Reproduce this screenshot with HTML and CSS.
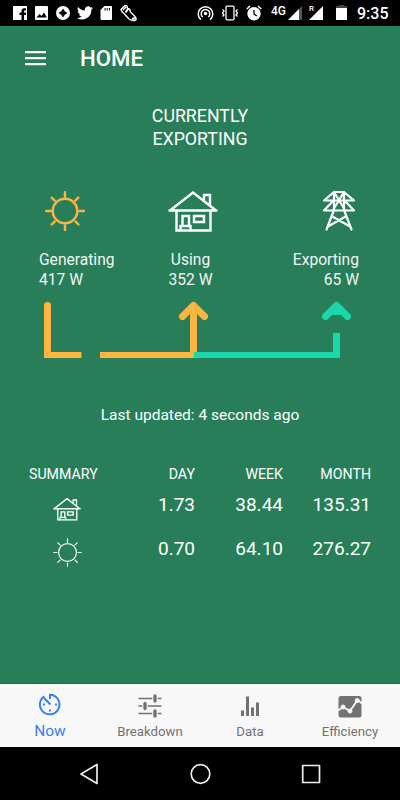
FILE: index.html
```
<!DOCTYPE html>
<html lang="en">
<head>
    <meta charset="UTF-8">
    <title>Home</title>
    <link rel="stylesheet" href="styles.css">
</head>
<body>
<svg class="defs">
    <symbol id="house" viewBox="0 0 50 42">
        <path d="M2 20.500 25 2.500 48 20.500M1.500 20.500h47M8.500 20.500V40.500h34V20.500M36 10V5h6v10"/>
        <path d="M14.500 36V26h6.500v10M12.500 40v-4h10v4M26 26h10v6h-10z"/>
    </symbol>
    <symbol id="sun" viewBox="0 0 40 40">
        <circle cx="20" cy="20" r="12.300"/>
        <path d="M20 1.200v4.500M20 34.500v4.500M1 20h4.700M34.500 20h4.500M6.700 6.700l3 3M30.500 30.500l3 3M33.300 6.700l-3 3M9.700 30.500l-3 3"/>
    </symbol>
</svg>
<div class="status">
    <div class="notices">
        <svg width="15" height="16" viewBox="0 0 15 16"><path fill="#fff" d="M0 1h14v14h-3V10h2V7.500h-2V6.200q0-.7.800-.7H13V3.200h-2Q8.500 3.200 8.500 5.700v1.800H6.500V10h2v5H0z"/></svg>
        <svg width="14" height="16" viewBox="0 0 14 16"><rect y="1" width="13" height="14" rx="1" fill="#fff"/><path d="M1.500 12.500 4.500 9 6.500 11 9 7.500 11.800 12.500z"/></svg>
        <svg width="14" height="16" viewBox="0 0 14 16"><circle cx="7" cy="8" r="7" fill="#fff"/><path d="M7 3.500 8.800 6.200 11.500 8 8.800 9.800 7 12.500 5.200 9.800 2.500 8 5.200 6.200z"/></svg>
        <svg width="16" height="16" viewBox="0 0 24 20"><path fill="#fff" d="M24 2.400c-.9.400-1.800.7-2.800.8a5 5 0 0 0 2.100-2.700 10 10 0 0 1-3.100 1.200 4.900 4.900 0 0 0-8.400 4.500A14 14 0 0 1 1.700 1 4.900 4.900 0 0 0 3.200 7.600 4.900 4.900 0 0 1 1 7a4.900 4.900 0 0 0 3.900 4.900 5 5 0 0 1-2.200.1 4.900 4.900 0 0 0 4.600 3.400A9.900 9.900 0 0 1 0 17.400 14 14 0 0 0 21.500 5q1.500-1.100 2.500-2.600z"/></svg>
        <svg width="13" height="16" viewBox="0 0 13 16"><path fill="#fff" d="M4.500 1H11q1 0 1 1v12q0 1-1 1H1.500q-1 0-1-1V5z"/><path stroke="#000" stroke-width="1" d="M5 3v2.500M7.200 3v2.500M9.400 3v2.500"/></svg>
        <svg width="18" height="18" viewBox="0 0 18 18" fill="none" stroke="#fff" stroke-width="1.400"><path d="M5 1.500 1 5.500Q1.500 8 4 9.500L9 15q3.500 2.500 6.800 1 1-2-1.300-4L10.500 8Q10 4.500 7.500 4.500L7 2zM3 6l3-3"/><path d="M8 5 5.500 8.500M12 14.500q2 .5 3-1" stroke-width="2"/></svg>
    </div>
    <div class="system">
        <svg width="17" height="16" viewBox="0 0 17 16" fill="none" stroke="#fff" stroke-width="1.500"><circle cx="8.500" cy="8.500" r="1.800" fill="#fff" stroke="none"/><path d="M4 14.700a7.300 7.300 0 1 1 9 0M5.700 12a4.300 4.300 0 1 1 5.600 0"/></svg>
        <svg width="18" height="16" viewBox="0 0 18 16" fill="none" stroke="#fff" stroke-width="1.300"><rect x="5" y="1.200" width="8" height="13.600" rx="1"/><path d="M1.500 4.500 3 6 1.500 8 3 10 1.500 11.500M16.500 4.500 15 6l1.500 2-1.500 2 1.500 1.500"/></svg>
        <svg width="16" height="16" viewBox="0 0 16 16"><circle cx="8" cy="8.800" r="6.700" fill="#fff"/><path d="M.8 4 4 1M15.200 4 12 1" stroke="#fff" stroke-width="1.500"/><path d="M8 5v4.200l2.800 1.700" fill="none" stroke="#000" stroke-width="1.300"/></svg>
        <span class="network">4G</span>
        <svg class="signal" width="14" height="16" viewBox="0 0 14 16"><path fill="#555" d="M14 1v14H0z"/><path fill="#fff" d="M11 4v11H0z"/></svg>
        <div class="roaming"><span>R</span><svg width="14" height="16" viewBox="0 0 14 16"><path fill="#fff" d="M14 1v14H0z"/></svg></div>
        <svg class="battery" width="11" height="16" viewBox="0 0 11 16"><path fill="#444" d="M3 0h5v1h3v3H0V1h3z"/><path fill="#fff" d="M0 3h11v12H0z"/></svg>
        <span class="clock">9:35</span>
    </div>
</div>
<main>
    <header>
        <div class="menu"><i></i><i></i><i></i></div>
        <h1>HOME</h1>
    </header>
    <h2>CURRENTLY<br>EXPORTING</h2>
    <div class="power">
        <div class="source generating">
            <svg class="icon-sun" width="40" height="40"><use href="#sun"/></svg>
            <p>Generating<br>417 W</p>
        </div>
        <div class="source using">
            <svg class="icon-house" width="50" height="42"><use href="#house"/></svg>
            <p>Using<br>352 W</p>
        </div>
        <div class="source exporting">
            <svg class="icon-pylon" width="34" height="42" viewBox="0 0 34 42">
                <path d="M12 2h10M12 2 2 10.500h30L22 2M12 2v8M22 2v8M11 11 2 20.500h30L23 11M12 2l11 18M22 2 11 20M12 11v9L4.500 39.500M22 11v9l7.500 19.500M9.500 26 28 36.500M24.500 26 6 36.500"/>
            </svg>
            <p>Exporting<br>65 W</p>
        </div>
    </div>
    <svg class="flow" width="400" height="60" viewBox="0 0 400 60">
        <g class="orange">
            <path d="M47.500 6v52" stroke-linecap="butt"/>
            <path d="M47.500 5.500v10"/>
            <path class="line" d="M44 55h37.500M100 55h97"/>
            <path d="M193.500 6v48" stroke-linecap="butt"/>
            <path d="M182.500 16.500 193.500 5.500l11 11"/>
        </g>
        <g class="teal">
            <path class="line" d="M194 55h146"/>
            <path stroke-linecap="butt" d="M336.500 33v25"/>
            <path d="M325.500 16.500l11-11 11 11"/>
            <path class="tip" d="M330 15l6.500-8 6.500 8z"/>
        </g>
    </svg>
    <p class="updated">Last updated: 4 seconds ago</p>
    <div class="summary">
        <span class="label">SUMMARY</span><span class="label">DAY</span><span class="label">WEEK</span><span class="label">MONTH</span>
        <svg class="row-house" width="28" height="24"><use href="#house"/></svg><b>1.73</b><b>38.44</b><b>135.31</b>
        <svg class="row-sun" width="29" height="29"><use href="#sun"/></svg><b>0.70</b><b>64.10</b><b>276.27</b>
    </div>
</main>
<nav class="tabs">
    <div class="tab active">
        <svg width="24" height="24" viewBox="0 0 24 24"><path fill="none" stroke="currentColor" stroke-width="2" d="M12.500 12.500 6 6M6.300 4.300A9.800 9.800 0 1 0 12 2.700V7"/><path fill="currentColor" d="M5 11.500h2v2H5zM17 11.500h2v2h-2zM11 17.500h2v2h-2z"/></svg>
        <span>Now</span>
    </div>
    <div class="tab">
        <svg width="24" height="24" viewBox="0 0 24 24" fill="none" stroke="currentColor"><path stroke-width="1.500" d="M.5 4.500h23M.5 12h23M.5 19.500h23"/><path stroke="#f8f8f8" stroke-width="5.500" d="M17 3v3M7 10.500v3M17 18v3"/><path stroke-width="3.300" stroke-linecap="round" d="M17 2v5M7 9.500v5M17 17v5"/></svg>
        <span>Breakdown</span>
    </div>
    <div class="tab">
        <svg width="24" height="24" viewBox="0 0 24 24" fill="currentColor"><path d="M3 16.500h3V22H3zM8 2.500h3V22H8zM13 13.500h3V22h-3zM18 8.500h3V22h-3z"/></svg>
        <span>Data</span>
    </div>
    <div class="tab">
        <svg width="24" height="24" viewBox="0 0 24 24"><rect x=".5" y="2" width="23" height="21.500" rx="2.500" fill="currentColor"/><g fill="#f8f8f8" stroke="#f8f8f8"><path fill="none" stroke-width="1.800" d="M0 16.500 5 13l7 4 7.500-11L24 9.500"/><circle cx="5" cy="13" r="2"/><circle cx="12" cy="17" r="2"/><circle cx="19.200" cy="6.500" r="2"/></g></svg>
        <span>Efficiency</span>
    </div>
</nav>
<div class="buttons">
    <svg width="22" height="24" viewBox="0 0 22 24"><path d="M18 2.500v19L2 12z"/></svg>
    <svg width="22" height="24" viewBox="0 0 22 24"><circle cx="10.500" cy="12" r="9.300"/></svg>
    <svg width="22" height="24" viewBox="0 0 22 24"><rect x="2.700" y="3.500" width="16.800" height="17"/></svg>
</div>
</body>
</html>
```
FILE: styles.css
```
* {
    box-sizing: border-box;
}
body {
    margin: 0;
    width: 400px;
    height: 800px;
    display: flex;
    flex-direction: column;
    overflow: hidden;
    font-family: Roboto, sans-serif;
    background: #000;
    color: #fff;
}
svg {
    display: block;
    flex-shrink: 0;
}
h1, h2, p {
    margin: 0;
}
.defs {
    width: 0;
    height: 0;
}
.status {
    height: 26px;
    padding: 0 11px 0 13px;
    display: flex;
    justify-content: space-between;
    align-items: center;
}
.notices, .system {
    display: flex;
    align-items: center;
    gap: 7px;
}
.system {
    margin-right: 1px;
}
.network {
    width: 17px;
    margin-left: 2px;
    font-size: 12px;
    font-weight: 500;
    line-height: 12px;
    padding-bottom: 5px;
}
.signal {
    margin-left: -7px;
}
.roaming {
    position: relative;
}
.roaming span {
    position: absolute;
    left: 0;
    top: 0;
    font-size: 8px;
    line-height: 8px;
    font-weight: 500;
}
.battery {
    margin-left: 6px;
}
.clock {
    width: 31px;
    margin-left: 3px;
    font-size: 16px;
    font-weight: 500;
    line-height: 20px;
    padding-top: 2px;
}
main {
    height: 658px;
    background: #287e59;
    border-bottom: 1px solid #0f7548;
}
header {
    height: 64px;
    padding-left: 25px;
    display: flex;
    align-items: center;
}
.menu {
    width: 21px;
    margin-right: 34px;
    display: grid;
    gap: 3px;
}
.menu i {
    height: 3px;
    background: #fff;
    border-bottom: 1px solid #5b9d7f;
}
h1 {
    font-size: 22.200px;
    font-weight: 500;
}
h2 {
    margin-top: 14px;
    font-size: 17.800px;
    font-weight: 400;
    line-height: 23px;
    text-align: center;
}
.power {
    height: 110px;
    margin-top: 40px;
    padding: 0 41px 0 39px;
    display: grid;
    grid-template-columns: 90px 123px 107px;
}
.source {
    display: flex;
    flex-direction: column;
    justify-content: space-between;
    padding-bottom: 10px;
    font-size: 15.600px;
    line-height: 20px;
    color: #f0f6f3;
}
.using {
    align-items: center;
    text-align: center;
}
.exporting {
    align-items: flex-end;
    text-align: right;
}
.icon-sun, .icon-house, .icon-pylon, .row-house, .row-sun {
    fill: none;
    stroke: #fff;
    stroke-width: 2.400;
    stroke-linecap: round;
}
.icon-sun {
    margin: 1px 0 0 6px;
    stroke: #ffb641;
}
.icon-house {
    margin-left: 5px;
}
.icon-pylon {
    margin-right: 3px;
    stroke-linejoin: round;
    stroke-width: 2.200;
}
.flow {
    fill: none;
    stroke-width: 7;
    stroke-linecap: round;
    stroke-linejoin: round;
}
.flow .line {
    stroke-width: 6;
    stroke-linecap: butt;
}
.orange {
    stroke: #ffb641;
}
.teal {
    stroke: #1bd8aa;
}
.tip {
    fill: #1bd8aa;
    stroke: none;
}
.updated {
    margin-top: 45px;
    font-size: 15.500px;
    line-height: 20px;
    text-align: center;
}
.summary {
    margin-top: 39px;
    padding: 0 29px;
    display: grid;
    grid-template-columns: 78px 88px 88px 88px;
    grid-template-rows: 20px 41px 47px;
    align-items: center;
    text-align: right;
}
.summary .label {
    font-size: 14.200px;
}
.summary .label:first-child {
    text-align: left;
}
.summary b {
    font-size: 19px;
    font-weight: 400;
}
.row-house {
    margin: 8px 0 0 24px;
}
.row-sun {
    margin: 7px 0 0 24px;
    stroke-width: 1.600;
}
.tabs {
    height: 63px;
    display: grid;
    grid-template-columns: repeat(4, 1fr);
    background: #f8f8f8;
    color: #727272;
}
.tab {
    padding-top: 10px;
    display: flex;
    flex-direction: column;
    align-items: center;
    font-size: 13.200px;
}
.tab span {
    line-height: 18px;
    margin-top: 5px;
}
.tab.active {
    padding-top: 8px;
    color: #387ef5;
    font-size: 15.500px;
}
.tab.active span {
    margin-top: 6px;
}
.buttons {
    height: 53px;
    padding: 0 78px 0 79px;
    display: flex;
    align-items: center;
    justify-content: space-between;
    fill: none;
    stroke: #eee;
    stroke-width: 1.700;
    stroke-linejoin: round;
}
```
